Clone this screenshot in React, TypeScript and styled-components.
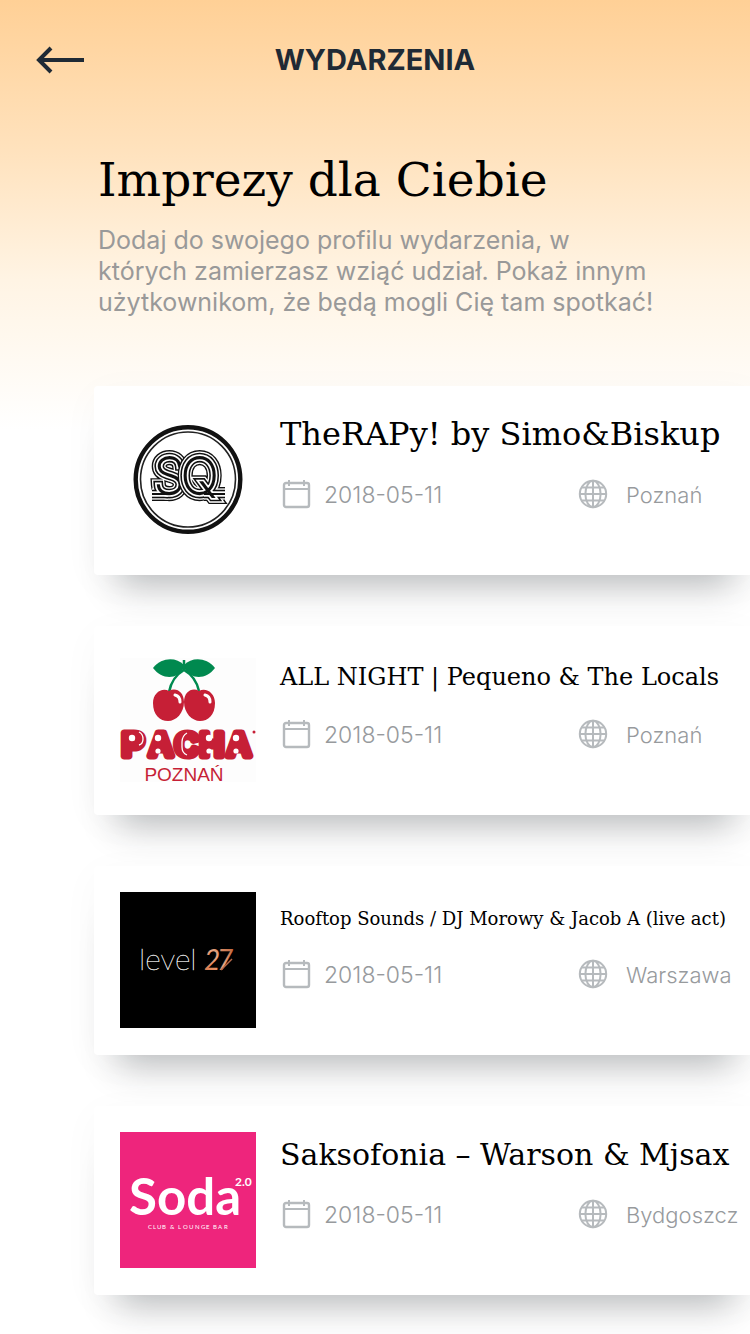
import React from "react";
import styled, { createGlobalStyle } from "styled-components";

const sans = `Inter, "Noto Sans", sans-serif`;
const serif = `"DejaVu Serif", serif`;

const GlobalStyle = createGlobalStyle`
  *, *::before, *::after { box-sizing: border-box; }
  body { margin: 0; background: #fff; font-family: ${sans}; }
  h1, h2, p, ul { margin: 0; padding: 0; font-weight: 400; }
`;

const Page = styled.div`
  min-height: 100vh;
  overflow: hidden;
  padding-bottom: 38px;
  background: linear-gradient(180deg, #ffd096 0, #ffe2bd 150px, #fff4e4 280px, #fff 430px);
`;

const Header = styled.header`
  display: grid;
  grid-template-columns: 48px 1fr 48px;
  align-items: center;
  height: 120px;
  padding: 0 36px;
`;

const BackButton = styled.button`
  display: flex;
  padding: 0;
  border: 0;
  background: none;
  cursor: pointer;
`;

const HeaderTitle = styled.h1`
  color: #1f2a35;
  font-size: 29px;
  line-height: 36px;
  font-weight: 700;
  text-align: center;
`;

const Intro = styled.section`
  padding: 28px 80px 68px 98px;
`;

const IntroTitle = styled.h2`
  color: #000;
  font-family: ${serif};
  font-size: 47px;
  line-height: 64px;
`;

const IntroText = styled.p`
  margin-top: 13px;
  color: #999;
  font-size: 25px;
  line-height: 31px;
  white-space: nowrap;
`;

const List = styled.ul`
  display: flex;
  flex-direction: column;
  gap: 51px;
  margin: 0 -6px 0 94px;
  list-style: none;
`;

const Card = styled.li`
  display: flex;
  gap: 24px;
  min-height: 189px;
  padding: 26px;
  padding-right: 0;
  border-radius: 4px;
  background: #fff;
  box-shadow: 0 34px 34px -24px rgba(30, 34, 40, 0.3), 0 8px 40px rgba(30, 60, 60, 0.03);
`;

const Logo = styled.svg`
  flex: none;
  width: 136px;
  height: 136px;
`;

const Details = styled.div`
  flex: 1;
  min-width: 0;
`;

const EventTitle = styled.h2`
  height: 44px;
  color: #000;
  font-family: ${serif};
  font-size: 32px;
  line-height: 44px;
  white-space: nowrap;
`;

const TitleText = styled.span<{ $size: number }>`
  font-size: ${(p) => p.$size}px;
  line-height: 1;
`;

const Meta = styled.div`
  display: grid;
  grid-template-columns: 298px 1fr;
  margin-top: 22px;
`;

const MetaItem = styled.span<{ $gap: number }>`
  display: flex;
  align-items: center;
  gap: ${(p) => p.$gap}px;
  color: #979a9d;
  font-size: 22px;
  line-height: 34px;
  font-weight: 300;
  white-space: nowrap;
`;

const EventDate = styled.time`
  font-size: 23px;
`;

const MetaIcon = styled.svg`
  flex: none;
  fill: none;
  stroke: #b6babd;
  stroke-width: 2;
`;

const BackArrow = () => (
  <svg width="48" height="28" viewBox="0 0 48 28" fill="none" stroke="#1f2a35" strokeWidth="4" aria-hidden="true">
    <path d="M48 14H4M15 2 3 14l12 12" />
  </svg>
);

const CalendarIcon = () => (
  <MetaIcon width="32" height="32" viewBox="0 0 32 32" aria-hidden="true">
    <rect x="4" y="4" width="25" height="24" rx="2" strokeWidth="2.400" />
    <path d="M4 10h25M9 1v6M24 1v6" />
  </MetaIcon>
);

const GlobeIcon = () => (
  <MetaIcon width="30" height="32" viewBox="0 0 30 32" aria-hidden="true">
    <circle cx="15" cy="15" r="13.2" />
    <ellipse cx="15" cy="15" rx="7.600" ry="13.2" />
    <path d="M15 2v26M2 15h26M4 8.5h22M4 21.5h22" />
  </MetaIcon>
);

const stripes: Array<[string, number]> = [
  ["#111", 14],
  ["#fff", 11.2],
  ["#111", 8.6],
  ["#fff", 5.4],
  ["#111", 2],
];

const StripedRibbon = ({ href }: { href: string }) => (
  <g fill="none">
    {stripes.map(([color, width]) => (
      <use key={width} href={href} stroke={color} strokeWidth={width} />
    ))}
  </g>
);

const SqLogo = () => (
  <Logo viewBox="0 0 136 136" role="img" aria-label="SQ">
    <defs>
      <g id="sq-left" fontFamily="Inter" fontSize="50" fontWeight="100">
        <path d="M32 82h16" />
        <text x="34" y="82">
          S
        </text>
      </g>
      <g id="sq-right" fontFamily="Inter" fontSize="50" fontWeight="100">
        <path d="M84 82h21" />
        <text x="61" y="82">
          Q
        </text>
      </g>
    </defs>
    <circle cx="68" cy="67.500" r="52.300" fill="#fff" stroke="#111" strokeWidth="4.400" />
    <circle cx="68" cy="67.500" r="47.500" fill="none" stroke="#222" strokeWidth="1.600" />
    <StripedRibbon href="#sq-left" />
    <StripedRibbon href="#sq-right" />
  </Logo>
);

const PachaLogo = () => (
  <Logo viewBox="0 0 136 136" role="img" aria-label="Pacha Poznań">
    <rect y="6" width="136" height="124" fill="#fdfdfd" />
    <g fill="#00894f">
      <path d="M64 13C56 5 42 5 33 16c9 12 24 12 31 0Z" />
      <path d="M64 13c8-8 22-8 31 3-9 12-24 12-31 0Z" />
    </g>
    <path d="M64 8v10C57 22 51 30 49 40M64 18c7 4 13 12 15 21" fill="none" stroke="#00894f" strokeWidth="2.500" />
    <g fill="#c61f36">
      <path d="M49 39c-7-4-16 2-16 12 0 12 7 18 15 18s16-8 16-19c0-10-8-15-15-11Z" />
      <path d="M79 39c-7-4-15 1-15 11 0 11 8 19 16 19s15-6 15-18c0-10-9-16-16-12Z" />
    </g>
    <path d="M55 43q5 1 5 7M85 43q5 1 5 7" fill="none" stroke="#fff" strokeWidth="3" strokeLinecap="round" />
    <text
      x="2 29 55 80 107"
      y="104"
      fontFamily="Liberation Sans Narrow, Liberation Sans"
      fontSize="33"
      fontWeight="700"
      fill="#c61f36"
      stroke="#c61f36"
      strokeWidth="7"
      strokeLinejoin="round"
    >
      PACHA
    </text>
    <g fill="#fff">
      <circle cx="12" cy="86" r="3.200" />
      <circle cx="38" cy="86" r="3.200" />
      <circle cx="89" cy="86" r="3.200" />
      <circle cx="116" cy="86" r="3.200" />
      <circle cx="38" cy="99" r="2.600" />
      <circle cx="89" cy="99" r="2.600" />
      <circle cx="116" cy="99" r="2.600" />
    </g>
    <path d="M19 80q4 2 4 7t-4 6M67 81q-5 3-5 9v5q0 6 5 8" fill="none" stroke="#fff" strokeWidth="1.300" />
    <circle cx="134" cy="80" r="1.500" fill="#c61f36" />
    <text x="64" y="129" textAnchor="middle" fontFamily="Liberation Sans" fontSize="19" fill="#c61f36">
      POZNAŃ
    </text>
  </Logo>
);

const LevelLogo = () => (
  <Logo viewBox="0 0 136 136" role="img" aria-label="level 27">
    <defs>
      <linearGradient id="copper" x1="0" y1="1" x2="1" y2="0">
        <stop offset="0" stopColor="#d9703f" />
        <stop offset="0.500" stopColor="#e8a582" />
        <stop offset="1" stopColor="#b5572c" />
      </linearGradient>
    </defs>
    <rect width="136" height="136" fill="#000" />
    <text x="19" y="78" fontFamily="Lato" fontWeight="100" fontSize="30" fill="#fff" stroke="#fff" strokeWidth="0.300">
      level
    </text>
    <text x="84 97" y="78" fontFamily="Lato" fontStyle="italic" fontSize="28" fill="url(#copper)">
      27
    </text>
    <path d="M101 78 112 67" stroke="#b5694a" strokeWidth="1.500" />
  </Logo>
);

const SodaLogo = () => (
  <Logo viewBox="0 0 136 136" role="img" aria-label="Soda 2.0 Club & Lounge Bar">
    <rect width="136" height="136" fill="#ee257c" />
    <g fill="#fff" fontFamily="Lato">
      <text x="9" y="83" fontSize="51" fontWeight="700">
        Soda
      </text>
      <text x="115" y="54" fontSize="12" fontWeight="700">
        2.0
      </text>
      <text x="28 33 37 42 50 58 63 69 75 81 86 93 98 104" y="97" fontSize="6">
        CLUB&amp;LOUNGEBAR
      </text>
    </g>
  </Logo>
);

const events = [
  { title: "TheRAPy! by Simo&Biskup", size: 32, city: "Poznań", logo: <SqLogo /> },
  { title: "ALL NIGHT | Pequeno & The Locals", size: 24, city: "Poznań", logo: <PachaLogo /> },
  { title: "Rooftop Sounds / DJ Morowy & Jacob A (live act)", size: 18, city: "Warszawa", logo: <LevelLogo /> },
  { title: "Saksofonia – Warson & Mjsax", size: 30, city: "Bydgoszcz", logo: <SodaLogo /> },
];

export default function App() {
  return (
    <>
      <GlobalStyle />
      <Page>
        <Header>
          <BackButton type="button" aria-label="Wróć">
            <BackArrow />
          </BackButton>
          <HeaderTitle>WYDARZENIA</HeaderTitle>
        </Header>
        <main>
          <Intro>
            <IntroTitle>Imprezy dla Ciebie</IntroTitle>
            <IntroText>
              Dodaj do swojego profilu wydarzenia, w<br />
              których zamierzasz wziąć udział. Pokaż innym
              <br />
              użytkownikom, że będą mogli Cię tam spotkać!
            </IntroText>
          </Intro>
          <List>
            {events.map((event) => (
              <Card key={event.title}>
                {event.logo}
                <Details>
                  <EventTitle>
                    <TitleText $size={event.size}>{event.title}</TitleText>
                  </EventTitle>
                  <Meta>
                    <MetaItem $gap={12}>
                      <CalendarIcon />
                      <EventDate dateTime="2018-05-11">2018-05-11</EventDate>
                    </MetaItem>
                    <MetaItem $gap={18}>
                      <GlobeIcon />
                      {event.city}
                    </MetaItem>
                  </Meta>
                </Details>
              </Card>
            ))}
          </List>
        </main>
      </Page>
    </>
  );
}
